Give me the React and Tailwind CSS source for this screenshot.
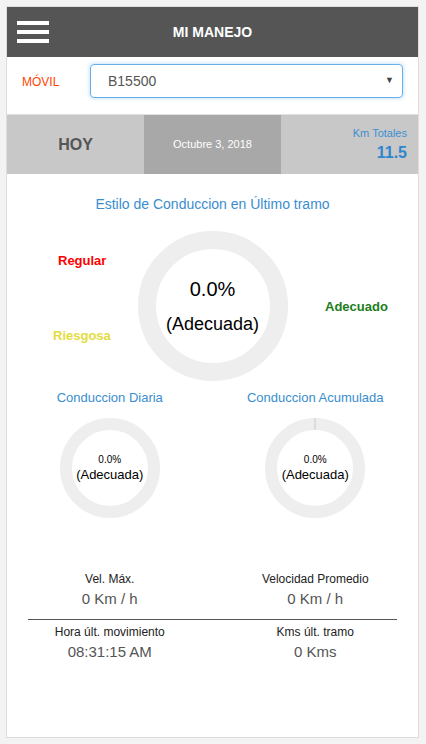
import React from "react";

const font = { fontFamily: '"Liberation Sans", Arial, sans-serif' };

const Donut = ({ size, stroke, sliver, children }) => {
  const r = (size - stroke) / 2;
  return (
    <div className="relative mx-auto" style={{ width: size, height: size }}>
      <svg width={size} height={size} className="absolute inset-0">
        <circle cx={size / 2} cy={size / 2} r={r} fill="none" stroke="#eeeeee" strokeWidth={stroke} />
        {sliver && (
          <line x1={size / 2} y1={0} x2={size / 2} y2={stroke} stroke="#b9d3b9" strokeWidth="1" />
        )}
      </svg>
      <div className="relative flex h-full flex-col items-center justify-center text-black">
        {children}
      </div>
    </div>
  );
};

const Stat = ({ label, value }) => (
  <div className="flex flex-col items-center">
    <span className="text-[12px] leading-[14px] text-[#222]">{label}</span>
    <span className="mt-[4px] text-[15px] leading-[17px] text-[#555]">{value}</span>
  </div>
);

export default function App() {
  return (
    <div className="min-h-[744px] bg-[#f3f3f3] pt-[6px] pl-[6px] pr-[7px]" style={font}>
      <div className="flex h-[732px] flex-col border border-[#dddddd] bg-white">
        {/* barra superior */}
        <div className="grid h-[50px] grid-cols-[1fr_auto_1fr] items-center bg-[#555555]">
          <div className="flex flex-col gap-[5px] pl-[10px]">
            <span className="block h-[4px] w-[32px] bg-white" />
            <span className="block h-[4px] w-[32px] bg-white" />
            <span className="block h-[4px] w-[32px] bg-white" />
          </div>
          <h1 className="text-[14px] font-bold text-white">MI MANEJO</h1>
          <div />
        </div>

        {/* selector de móvil */}
        <div className="flex h-[57px] items-start pt-[7px]">
          <span className="w-[83px] pl-[15px] pt-[9px] text-[12px] text-[#ff4500]">MÓVIL</span>
          <div className="flex h-[34px] w-[313px] items-center justify-between rounded-[4px] border border-[#66afe9] pl-[17px] pr-[8px] shadow-[0_0_4px_rgba(102,175,233,0.5)]">
            <span className="text-[14px] text-[#555]">B15500</span>
            <span className="text-[9px] text-[#444]">▼</span>
          </div>
        </div>

        {/* resumen del día */}
        <div className="grid h-[60px] grid-cols-3 border-t border-[#e0e0e0]">
          <div className="flex items-center justify-center bg-[#c8c8c8] text-[16px] font-bold text-[#555]">
            HOY
          </div>
          <div className="flex items-center justify-center bg-[#a8a8a8] text-[11px] text-white">
            Octubre 3, 2018
          </div>
          <div className="flex flex-col items-end justify-center bg-[#c8c8c8] pr-[11px]">
            <span className="text-[11px] leading-[14px] text-[#3d8fd1]">Km Totales</span>
            <span className="mt-[3px] text-[16px] font-bold leading-[20px] text-[#2f86cf]">11.5</span>
          </div>
        </div>

        <p className="mt-[21px] text-center text-[14px] leading-[18px] text-[#3a8dcf]">
          Estilo de Conduccion en Último tramo
        </p>

        {/* gráfico principal */}
        <div className="relative mt-[18px] h-[150px]">
          <Donut size={150} stroke={18}>
            <span className="text-[20px] leading-[22px]">0.0%</span>
            <span className="mt-[14px] text-[18px] leading-[20px]">(Adecuada)</span>
          </Donut>
          <span className="absolute left-[51px] top-[20px] text-[13px] font-bold text-[#ff0000]">Regular</span>
          <span className="absolute left-[46px] top-[95px] text-[13px] font-bold text-[#e4dc3c]">Riesgosa</span>
          <span className="absolute left-[318px] top-[66px] text-[13px] font-bold text-[#1b7d1b]">Adecuado</span>
        </div>

        {/* gráficos pequeños */}
        <div className="mt-[9px] grid grid-cols-2">
          <div className="flex flex-col items-center">
            <p className="text-[13px] leading-[16px] text-[#3a8dcf]">Conduccion Diaria</p>
            <div className="mt-[12px]">
              <Donut size={100} stroke={12}>
                <span className="text-[10px] leading-[12px]">0.0%</span>
                <span className="mt-[1px] text-[13px] leading-[15px]">(Adecuada)</span>
              </Donut>
            </div>
          </div>
          <div className="flex flex-col items-center">
            <p className="text-[13px] leading-[16px] text-[#3a8dcf]">Conduccion Acumulada</p>
            <div className="mt-[12px]">
              <Donut size={100} stroke={12} sliver>
                <span className="text-[10px] leading-[12px]">0.0%</span>
                <span className="mt-[1px] text-[13px] leading-[15px]">(Adecuada)</span>
              </Donut>
            </div>
          </div>
        </div>

        {/* estadísticas */}
        <div className="mt-[54px] grid grid-cols-2">
          <Stat label="Vel. Máx." value="0 Km / h" />
          <Stat label="Velocidad Promedio" value="0 Km / h" />
        </div>
        <div className="mx-[21px] mt-[12px] h-px bg-[#555]" />
        <div className="mt-[5px] grid grid-cols-2">
          <Stat label="Hora últ. movimiento" value="08:31:15 AM" />
          <Stat label="Kms últ. tramo" value="0 Kms" />
        </div>
      </div>
    </div>
  );
}
